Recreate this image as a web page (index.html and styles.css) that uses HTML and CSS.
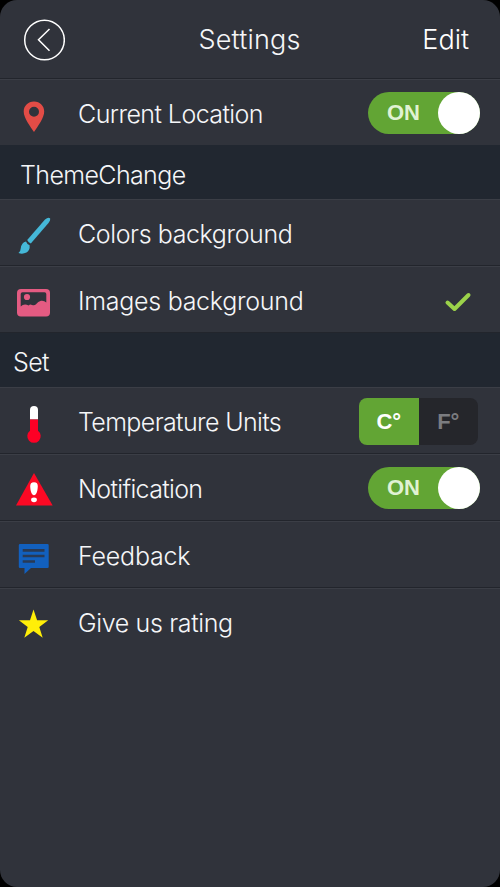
FILE: index.html
```html
<!DOCTYPE html>
<html lang="en">
<head>
<meta charset="utf-8">
<title>Settings</title>
<link rel="stylesheet" href="styles.css">
</head>
<body>
<main class="screen">
  <header class="header">
    <svg class="back" width="42" height="42" viewBox="0 0 42 42"><circle cx="21.500" cy="21" r="19.800"/><path d="M26.500 10 15.500 20.700l11 11"/></svg>
    <h1 class="title">Settings</h1>
    <span class="edit">Edit</span>
  </header>
  <section class="row first">
    <svg class="icon" width="68" height="66" viewBox="0 0 68 66"><path fill="#e24c46" fill-rule="evenodd" d="M34 21.500C28 21.500 23.700 26 23.700 31.500C23.700 38 30 46 34 52C38 46 44.200 38 44.200 31.500C44.200 26 40 21.500 34 21.500ZM34 26.800A5 5 0 1 1 34 36.800A5 5 0 0 1 34 26.800Z"/></svg>
    <span class="label current">Current Location</span>
    <span class="toggle"><span class="on">ON</span><i class="knob"></i></span>
  </section>
  <h2 class="group"><span class="theme">ThemeChange</span></h2>
  <section class="row">
    <svg class="icon" width="68" height="66" viewBox="0 0 68 66"><g fill="#45b8d8"><path d="M27.200 40 45 19.500Q48.500 16.700 50.200 18.500Q50.700 20 48.500 23L30.800 43.500Q28.500 43 27.200 40Z"/><path d="M26 41.500Q27 44.300 29.600 45.200Q30.200 50 26.500 52.500Q22.500 54.500 18.500 53Q20.500 52 20.700 48.500Q21.500 42.300 26 41.500Z"/></g></svg>
    <span class="label colors">Colors background</span>
  </section>
  <section class="row">
    <svg class="icon" width="68" height="66" viewBox="0 0 68 66"><rect x="17" y="22" width="33" height="27.500" rx="4" fill="#e45b82"/><path fill="#30333b" d="M22.500 25.200H44.500Q46.300 25.200 46.300 27V35.500Q44 33.300 41 33.800Q38 34.300 36 37.300Q34.500 39 32 38Q30 37 28.700 38.500Q24 36 20.700 39.500V27Q20.700 25.200 22.500 25.200Z"/><circle cx="27" cy="30" r="3.100" fill="#e45b82"/></svg>
    <span class="label images">Images background</span>
    <svg class="check" width="28" height="22" viewBox="0 0 28 22"><path d="m3.500 11.500 7 6.500L24.500 4"/></svg>
  </section>
  <h2 class="group set-group"><span class="set">Set</span></h2>
  <section class="row">
    <svg class="icon" width="68" height="66" viewBox="0 0 68 66"><path fill="#fff" d="M30 31.500V22a4 4 0 0 1 8 0v9.500Z"/><path fill="#fd0025" d="M30 31.500H38V42.800A6.700 6.700 0 1 1 30 42.800Z"/></svg>
    <span class="label temp">Temperature Units</span>
    <span class="units"><b class="celsius">C°</b><b class="fahrenheit">F°</b></span>
  </section>
  <section class="row">
    <svg class="icon" width="68" height="66" viewBox="0 0 68 66"><path fill="#fb0924" d="M34 18 52.700 50.500H16Z"/><g fill="#fff"><path d="M34 27.200Q38 27.300 37.800 31.500Q37.500 37.500 35.800 39.200Q34 41.300 32.200 39.200Q30.500 37.500 30.200 31.500Q30 27.300 34 27.200Z"/><ellipse cx="34" cy="44.800" rx="2.900" ry="2.400"/></g></svg>
    <span class="label notification">Notification</span>
    <span class="toggle"><span class="on">ON</span><i class="knob"></i></span>
  </section>
  <section class="row">
    <svg class="icon" width="68" height="66" viewBox="0 0 68 66"><path fill="#1260be" d="M20 22H47.500Q48.700 22 48.700 23.200V45Q48.700 46 47.500 46H31L24.500 52V46H20Q18.800 46 18.800 45V23.200Q18.800 22 20 22Z"/><path stroke="#293a55" stroke-width="2.700" d="M22.700 28.300H44.500M22.700 34H44.500M22.700 39.500H35"/></svg>
    <span class="label feedback">Feedback</span>
  </section>
  <section class="row last">
    <svg class="icon" width="68" height="66" viewBox="0 0 68 66"><path fill="#ffee08" d="M33.500 20.500 37.100 31.200H48.200L39.300 37.900 42.700 48.800 33.500 42.100 24.300 48.800 27.700 37.900 18.900 31.200H30Z"/></svg>
    <span class="label rating">Give us rating</span>
  </section>
</main>
</body>
</html>
```
FILE: styles.css
```css
* { box-sizing: border-box; }
body { margin: 0; background: #000; font-family: Inter, "Liberation Sans", sans-serif; }
.screen { height: 887px; background: #30333b; border-radius: 17px; overflow: hidden; color: #f5f6f8; }
.header { height: 79px; border-bottom: 1px solid #22252c; display: grid; grid-template-columns: 1fr auto 1fr; align-items: center; padding: 1px 31px 0 23px; }
.back { fill: none; stroke: #fff; stroke-width: 1.5; }
.title { margin: 0; padding-left: 7px; font-size: 27px; font-weight: 300; line-height: 36px; letter-spacing: .2px; }
.edit { justify-self: end; font-size: 27px; font-weight: 350; line-height: 36px; color: #fff; }
.row { height: 67px; display: flex; align-items: center; border-top: 1px solid #3b3e46; border-bottom: 1px solid #22252c; padding-right: 20px; }
.first { height: 66px; border-bottom: 0; }
.last { border-bottom-color: transparent; }
.icon { flex: none; width: 68px; margin-right: 10px; }
.label { padding-top: 2px; font-size: 25px; font-weight: 300; line-height: 34px; white-space: nowrap; flex: 1; }
.current { letter-spacing: -.57px; }
.theme { letter-spacing: -.62px; }
.colors { letter-spacing: -.4px; }
.images { letter-spacing: -.28px; }
.set { letter-spacing: -.6px; }
.temp { letter-spacing: -.63px; }
.notification { letter-spacing: -.66px; }
.feedback { letter-spacing: -.2px; }
.rating { letter-spacing: -.36px; }
.group { margin: 0; height: 54px; display: flex; align-items: center; padding: 5px 0 0 20px; background: #212730; font-size: 25px; font-weight: 300; line-height: 34px; }
.set-group { padding: 4px 0 0 13px; }
.toggle { width: 112px; height: 42px; border-radius: 21px; background: #62a534; display: flex; align-items: center; justify-content: space-between; padding-left: 19px; }
.on { font: bold 22px/30px "Liberation Sans", sans-serif; color: #e0f2d3; }
.knob { width: 42px; height: 42px; border-radius: 50%; background: #fff; }
.check { margin: 4px 8px 0 0; fill: none; stroke: #9bd24a; stroke-width: 4; stroke-linecap: round; stroke-linejoin: round; }
.units { width: 119px; height: 47px; margin: 2px 2px 0 0; display: flex; border-radius: 8px; overflow: hidden; font: bold 22px/48px "Liberation Sans", sans-serif; text-align: center; }
.celsius { flex: 1; background: #62a534; color: #fff; }
.fahrenheit { flex: 1; background: #25262b; color: #7b7c80; }
```
